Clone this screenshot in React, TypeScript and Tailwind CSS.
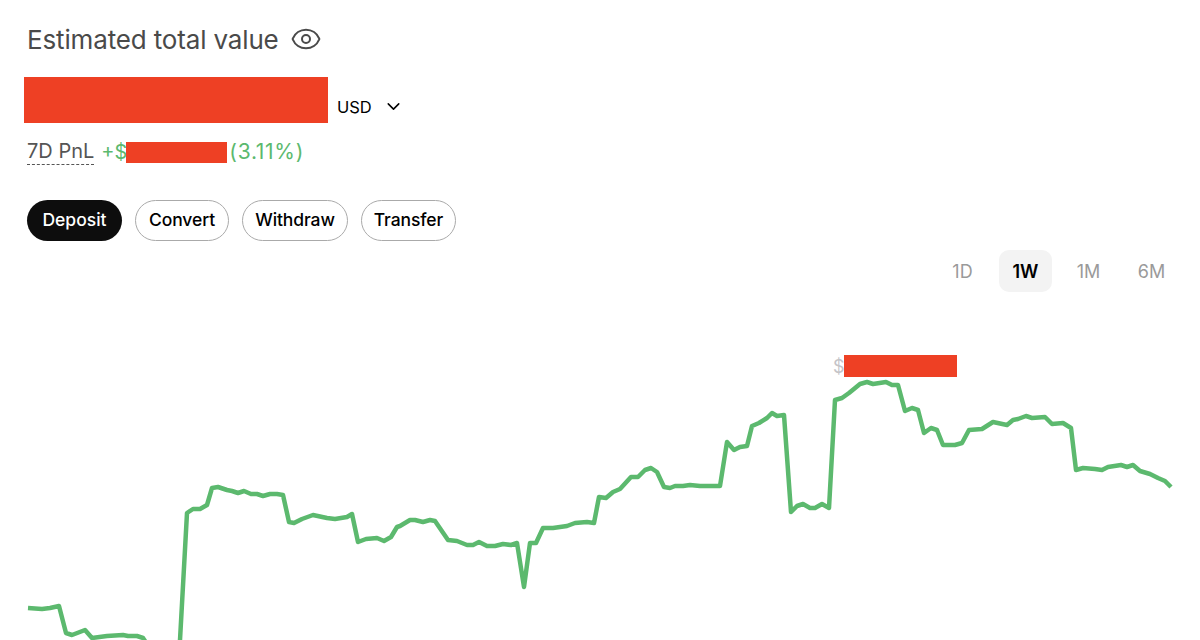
import { ChevronDown, Eye } from 'lucide-react';

const ACTIONS = [
  { label: 'Convert', width: 'w-[94px]' },
  { label: 'Withdraw', width: 'w-[106px]' },
  { label: 'Transfer', width: 'w-[95px]' },
];
const RANGES = ['1D', '1W', '1M', '6M'];

// points traced from the chart, in page coordinates
const LINE =
  '28,608 42,609 50,608 59,606 66,633 72,635 85,630 92,638 107,636 123,635 128,636 137,636 143,638 145,641 152,660 175,660 180,640 ' +
  '187,513 193,509 200,509 207,505 212,488 218,487 227,490 232,491 238,493 244,491 251,494 257,494 263,496 270,494 277,494 283,495 ' +
  '289,522 294,523 302,519 313,515 327,518 335,519 347,517 352,514 358,542 366,539 377,538 384,541 391,537 397,527 400,526 410,520 ' +
  '415,520 423,522 430,520 435,521 448,540 457,541 467,545 473,545 479,542 487,546 495,546 503,544 511,545 517,543 524,587 530,543 ' +
  '536,543 543,528 553,528 567,526 575,523 587,522 594,523 599,497 606,498 613,492 620,489 631,477 638,477 645,470 651,468 657,472 ' +
  '664,487 670,488 675,486 683,486 690,485 700,486 720,486 727,442 734,450 740,447 747,446 752,426 759,423 767,418 772,413 777,416 ' +
  '784,415 791,512 797,506 803,504 810,508 815,508 822,504 829,508 835,400 842,398 849,393 860,384 867,382 873,384 886,382 892,385 ' +
  '898,385 905,411 912,408 918,410 924,433 931,428 937,430 943,445 955,445 962,443 969,430 982,429 993,422 1007,425 1013,420 1018,419 ' +
  '1026,416 1032,418 1045,417 1052,424 1063,423 1071,428 1076,470 1083,468 1095,469 1102,470 1108,467 1121,465 1127,467 1133,465 ' +
  '1140,471 1150,474 1158,478 1165,481 1171,487';

export default function App() {
  return (
    <div className="relative h-[640px] w-[1200px] overflow-hidden bg-white font-['Inter',sans-serif]">
      <div className="pl-[27px] pt-[24px]">
        <div className="flex h-[30px] items-center">
          <h1 className="text-[26px] font-normal tracking-[-0.15px] text-[#4a4a4a]">Estimated total value</h1>
          <Eye className="ml-[11px] h-[32px] w-[32px] text-[#4a4a4a]" strokeWidth={1.5} />
        </div>

        <div className="mt-[23px] -ml-[3px] flex h-[46px] items-end">
          <div className="h-[46px] w-[304px] bg-[#ee4024]" />
          <span className="ml-[9px] text-[16.5px] leading-[31px] text-black">USD</span>
          <ChevronDown className="ml-[11px] mb-[6px] h-[21px] w-[21px] text-black" strokeWidth={1.75} />
        </div>

        <div className="mt-[16px] flex h-[26px] items-center text-[20px]">
          <span className="border-b border-dashed border-[#555] leading-[25px] text-[#555]">7D PnL</span>
          <span className="ml-[7px] text-[#5cb96e]">+$</span>
          <div className="-ml-[1px] h-[21px] w-[101px] bg-[#ee4024]" />
          <span className="ml-[2px] text-[21px] tracking-[0.7px] text-[#5cb96e]">(3.11%)</span>
        </div>

        <div className="mt-[35px] flex gap-[13px]">
          <button className="h-[41px] w-[95px] rounded-full bg-[#0d0d0d] text-[17.5px] font-medium text-white">
            Deposit
          </button>
          {ACTIONS.map(({ label, width }) => (
            <button
              key={label}
              className={`h-[41px] ${width} rounded-full border-[1.5px] border-[#aaaaaa] text-[17.5px] font-medium tracking-[-0.1px] text-black`}
            >
              {label}
            </button>
          ))}
        </div>
      </div>

      <div className="mt-[9px] flex justify-end gap-[10px] pr-[22px]">
        {RANGES.map((range) => (
          <div
            key={range}
            className={
              range === '1W'
                ? 'flex h-[42px] w-[53px] items-center justify-center rounded-[10px] bg-[#f3f3f3] text-[18px] font-semibold text-black'
                : 'flex h-[42px] w-[53px] items-center justify-center text-[18px] text-[#9a9a9a]'
            }
          >
            {range}
          </div>
        ))}
      </div>

      <svg className="block" width="1200" height="348" viewBox="0 292 1200 348" fill="none">
        <polyline
          points={LINE}
          stroke="#5cb96e"
          strokeWidth="4.5"
          strokeLinejoin="round"
          strokeLinecap="butt"
        />
      </svg>

      {/* hidden peak value over the chart */}
      <div className="absolute left-[833px] top-[355px] flex h-[22px] items-center text-[18px] text-[#c4c4c8]">
        <span className="w-[10.5px]">$</span>
        <div className="h-[22px] w-[113px] bg-[#ee4024]" />
      </div>
    </div>
  );
}
